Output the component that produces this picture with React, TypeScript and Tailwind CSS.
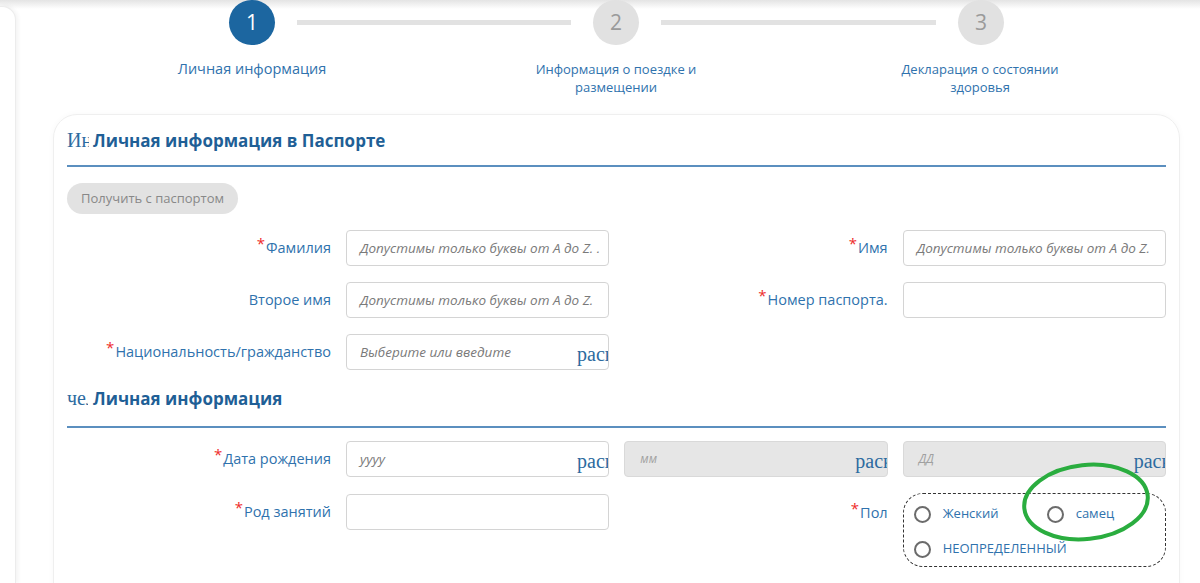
import React from "react";

const blue = "text-[#2f72ad]";

const Req = () => (
  <span className="relative top-[-5px] mr-[1px] text-[15px] text-[#ee2b2b]">*</span>
);

const Label = ({ text, req }: { text: string; req?: boolean }) => (
  <div className={`h-[36px] flex items-center justify-end text-[14.5px] ${blue}`}>
    {req && <Req />}
    {text}
  </div>
);

const Field = ({
  placeholder,
  dropdown,
  disabled,
}: {
  placeholder?: string;
  dropdown?: boolean;
  disabled?: boolean;
}) => (
  <div
    className={`relative h-[36px] overflow-hidden rounded-[4px] border ${
      disabled ? "bg-[#e6e6e6] border-[#d9d9d9]" : "bg-white border-[#d4d4d4]"
    }`}
  >
    <span
      className={`absolute top-0 h-full flex items-center whitespace-nowrap italic ${
        disabled ? "left-[15px] text-[12px] text-[#a0a0a0]" : "left-[13px] text-[13.5px] text-[#7a7a7a]"
      }`}
    >
      {placeholder}
    </span>
    {dropdown && (
      <span className="absolute left-[230px] top-[9px] whitespace-nowrap text-[20px] leading-none text-[#2d6ba0] [font-family:'Liberation_Serif',serif]">
        раскрывающийся
      </span>
    )}
  </div>
);

const SectionTitle = ({ prefix, title, prefixW }: { prefix: string; title: string; prefixW: string }) => (
  <div className="flex items-baseline border-b-2 border-[#5b8fbf]">
    <span
      className={`${prefixW} shrink-0 overflow-hidden whitespace-nowrap text-[20px] leading-[26px] text-[#2d6ba0] [font-family:'Liberation_Serif',serif]`}
    >
      {prefix}
    </span>
    <span className="text-[17px] leading-[26px] font-bold text-[#1f5f96]">{title}</span>
  </div>
);

const Radio = ({ text }: { text: string }) => (
  <div className="flex items-center h-[20px]">
    <span className="shrink-0 w-[17px] h-[17px] rounded-full border-2 border-[#6b6b6b] bg-white" />
    <span className={`ml-[12px] whitespace-nowrap text-[13px] ${blue}`}>{text}</span>
  </div>
);

const Step = ({ n, active }: { n: number; active?: boolean }) => (
  <div
    className={`w-[46px] h-[45px] rounded-full flex items-center justify-center text-[21px] ${
      active ? "bg-[#1c66a0] text-white" : "bg-[#e1e1e1] text-[#9a9a9a]"
    }`}
  >
    {n}
  </div>
);

const Line = ({ w }: { w: string }) => <div className={`${w} h-[5px] mx-[22px] bg-[#e2e2e2]`} />;

const steps = [
  { t: "Личная информация", active: true },
  { t: "Информация о поездке и размещении" },
  { t: "Декларация о состоянии здоровья" },
];

export default function App() {
  return (
    <div className="relative w-[1200px] h-[583px] overflow-hidden bg-white [font-family:'Open_Sans',sans-serif]">
      <div className="absolute inset-x-0 top-0 h-[9px] bg-gradient-to-b from-[#e4e4e4] to-white" />

      <div className="relative flex h-full">
        {/* sidebar edge */}
        <div className="w-[16px] mt-[6px] rounded-tr-[14px] border-r border-t border-[#ececec] bg-white shadow-[2px_0_4px_rgba(0,0,0,0.05)]" />

        <div className="flex-1 pl-[37px] pr-[20px]">
          {/* stepper */}
          <div className="flex items-center ml-[176px]">
            <Step n={1} active />
            <Line w="w-[274px]" />
            <Step n={2} />
            <Line w="w-[275px]" />
            <Step n={3} />
          </div>
          <div className="grid grid-cols-[364px_364px_364px] ml-[17px] mt-[15px]">
            {steps.map((s) => (
              <div key={s.t} className="flex justify-center">
                <div
                  className={`max-w-[170px] text-center leading-[18px] ${blue} ${
                    s.active ? "text-[14.5px]" : "text-[13px]"
                  }`}
                >
                  {s.t}
                </div>
              </div>
            ))}
          </div>

          {/* card */}
          <div className="mt-[18px] h-[520px] rounded-[24px] border border-[#efefef] shadow-[0_0_6px_rgba(0,0,0,0.03)] px-[13px] pt-[12px]">
            <div className="pb-[11px] border-b-2 border-[#5b8fbf]">
              <div className="flex items-baseline">
                <span className="w-[22px] mr-[4px] shrink-0 overflow-hidden whitespace-nowrap text-[20px] leading-[26px] text-[#2d6ba0] [font-family:'Liberation_Serif',serif]">
                  Информация
                </span>
                <span className="text-[17px] leading-[26px] font-bold text-[#1f5f96]">
                  Личная информация в Паспорте
                </span>
              </div>
            </div>

            <button className="mt-[16px] h-[31px] px-[14px] rounded-full bg-[#e2e2e2] text-[13px] text-[#888]">
              Получить с паспортом
            </button>

            <div className="mt-[16px] grid grid-cols-[264px_1fr_1fr_1fr] gap-x-[15px] gap-y-[16px]">
              <Label text="Фамилия" req />
              <Field placeholder="Допустимы только буквы от A до Z. ." />
              <Label text="Имя" req />
              <Field placeholder="Допустимы только буквы от A до Z." />

              <Label text="Второе имя" />
              <Field placeholder="Допустимы только буквы от A до Z." />
              <Label text="Номер паспорта." req />
              <Field />

              <Label text="Национальность/гражданство" req />
              <Field placeholder="Выберите или введите" dropdown />
            </div>

            <div className="mt-[15px] pb-[14px] border-b-2 border-[#5b8fbf]">
              <div className="flex items-baseline">
                <span className="w-[21px] mr-[5px] shrink-0 overflow-hidden whitespace-nowrap text-[20px] leading-[26px] text-[#2d6ba0] [font-family:'Liberation_Serif',serif]">
                  человек
                </span>
                <span className="text-[17px] leading-[26px] font-bold text-[#1f5f96]">Личная информация</span>
              </div>
            </div>

            <div className="mt-[13px] grid grid-cols-[264px_1fr_1fr_1fr] gap-x-[15px] gap-y-[17px] items-start">
              <Label text="Дата рождения" req />
              <Field placeholder="yyyy" dropdown />
              <Field placeholder="мм" dropdown disabled />
              <Field placeholder="ДД" dropdown disabled />

              <Label text="Род занятий" req />
              <Field />
              <div className="mt-[1px]">
                <Label text="Пол" req />
              </div>
              <div className="-mt-[1px] h-[74px] rounded-[20px] border border-dashed border-[#333] pl-[10px] pt-[10px]">
                <div className="grid grid-cols-[133px_1fr] gap-y-[15px]">
                  <Radio text="Женский" />
                  <Radio text="самец" />
                  <Radio text="НЕОПРЕДЕЛЕННЫЙ" />
                </div>
              </div>
            </div>
          </div>
        </div>
      </div>

      {/* hand-drawn annotation */}
      <svg className="absolute left-[1018px] top-[458px]" width="136" height="88" viewBox="0 0 136 88">
        <ellipse
          cx="68"
          cy="44"
          rx="62"
          ry="37"
          transform="rotate(-6 68 44)"
          fill="none"
          stroke="#2aad3f"
          strokeWidth="4"
        />
      </svg>
    </div>
  );
}
